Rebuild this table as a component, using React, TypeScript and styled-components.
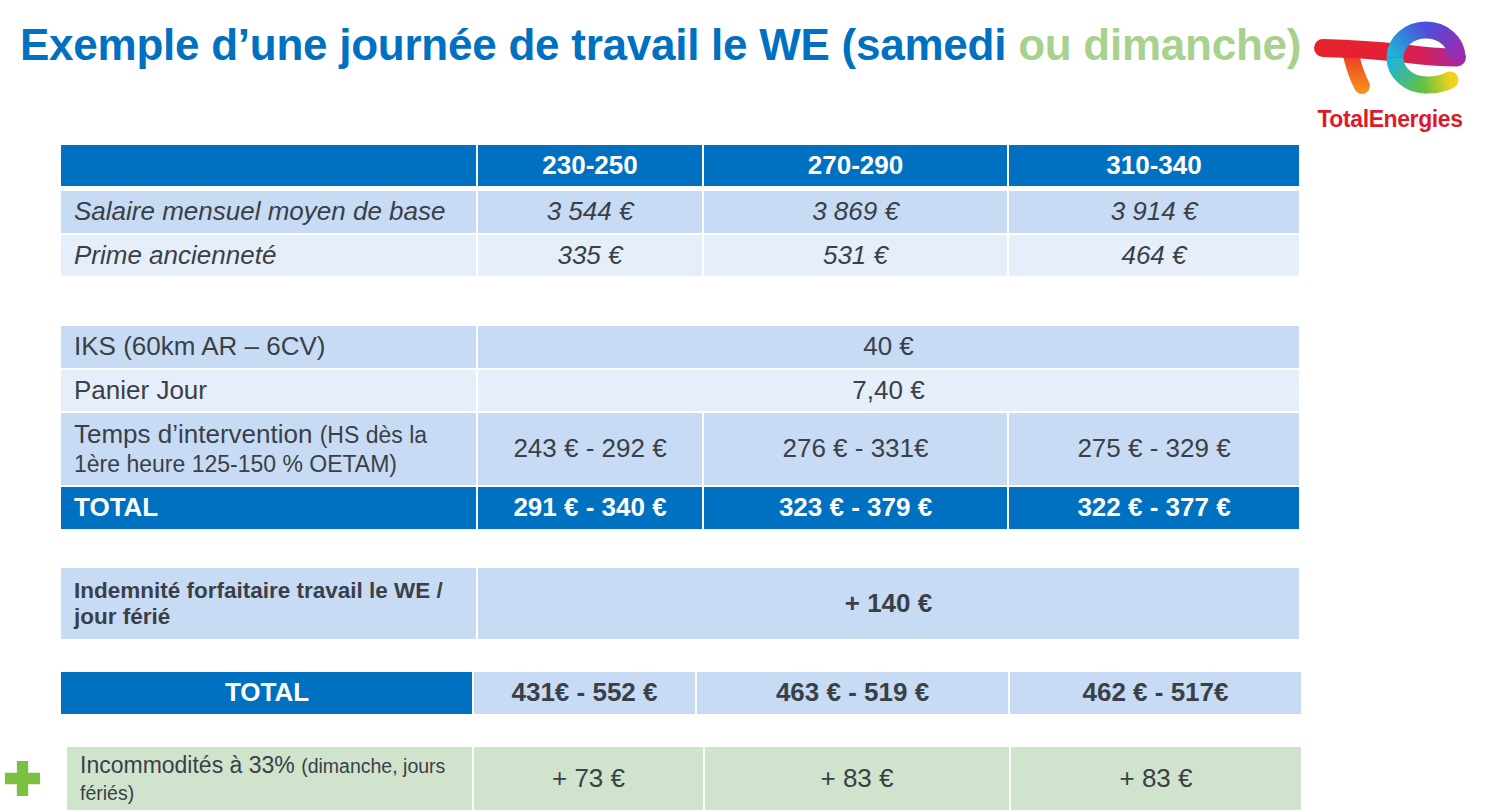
import React from "react";
import styled, { createGlobalStyle } from "styled-components";

const GlobalStyle = createGlobalStyle`
  html, body {
    margin: 0;
    padding: 0;
    background: #ffffff;
  }
  body {
    font-family: "Liberation Sans", Arial, sans-serif;
    color: #3a3f48;
  }
`;

const BLUE = "#0070c0";
const LIGHT = "#c8dbf4";
const PALE = "#e6eef9";
const GREEN = "#d0e3cc";

const Slide = styled.div`
  width: 1490px;
  height: 812px;
  overflow: hidden;
  background: #fff;
  display: flex;
  flex-direction: column;
`;

const Header = styled.header`
  height: 145px;
  display: flex;
  justify-content: space-between;
  align-items: flex-start;
`;

const Title = styled.h1`
  margin: 20px 0 0 20px;
  font-size: 44px;
  line-height: 50px;
  font-weight: 700;
  color: ${BLUE};
  letter-spacing: -0.25px;
  white-space: nowrap;

  & span {
    color: #a9d18e;
  }
`;

const Logo = styled.div`
  width: 170px;
  margin: 15px 15px 0 0;
  display: flex;
  flex-direction: column;
  align-items: center;
`;

const LogoText = styled.div`
  margin-top: 7px;
  font-size: 23px;
  font-weight: 700;
  letter-spacing: -0.4px;
  color: #dd1a2a;
`;

const Table = styled.div<{ $cols: string; $left?: number; $mt: number }>`
  display: grid;
  grid-template-columns: ${(p) => p.$cols};
  column-gap: 2px;
  row-gap: 2px;
  margin-top: ${(p) => p.$mt}px;
  margin-left: ${(p) => p.$left ?? 61}px;
  width: max-content;
`;

type Tone = "blue" | "light" | "pale" | "green";

const toneBg: Record<Tone, string> = {
  blue: BLUE,
  light: LIGHT,
  pale: PALE,
  green: GREEN,
};

const Cell = styled.div<{
  $tone: Tone;
  $h: number;
  $span?: number;
  $label?: boolean;
  $bold?: boolean;
  $italic?: boolean;
  $size?: number;
  $center?: boolean;
  $padR?: number;
}>`
  background: ${(p) => toneBg[p.$tone]};
  height: ${(p) => p.$h}px;
  grid-column: ${(p) => (p.$span ? `span ${p.$span}` : "auto")};
  display: flex;
  align-items: center;
  justify-content: ${(p) => (p.$label && !p.$center ? "flex-start" : "center")};
  padding: ${(p) => (p.$label ? `0 ${p.$padR ?? 12}px 0 13px` : "0")};
  box-sizing: border-box;
  font-size: ${(p) => p.$size ?? 26}px;
  line-height: 1.15;
  font-weight: ${(p) => (p.$bold ? 700 : 400)};
  font-style: ${(p) => (p.$italic ? "italic" : "normal")};
  color: ${(p) => (p.$tone === "blue" ? "#ffffff" : "#3a3f48")};
  white-space: ${(p) => (p.$label ? "normal" : "nowrap")};
`;

const Mixed = styled.div<{ $lh: number }>`
  line-height: ${(p) => p.$lh}px;
`;

const Small = styled.span<{ $size: number }>`
  font-size: ${(p) => p.$size}px;
`;

const Gap = styled.div<{ $h: number }>`
  height: ${(p) => p.$h}px;
  grid-column: 1 / -1;
`;

const PlusRow = styled.div`
  display: flex;
  align-items: center;
  margin-top: 33px;
`;

const PlusIcon = styled.div`
  width: 62px;
  display: flex;
  justify-content: flex-start;
  padding-left: 5px;
  box-sizing: border-box;
`;

const MAIN_COLS = "415px 224px 303px 290px";

function TotalLogo() {
  return (
    <svg width="170" height="84" viewBox="0 0 170 84">
      <defs>
        <linearGradient id="bar" x1="10" y1="0" x2="160" y2="0" gradientUnits="userSpaceOnUse">
          <stop offset="0" stopColor="#e8222c" />
          <stop offset="0.5" stopColor="#e21f36" />
          <stop offset="0.75" stopColor="#cf2160" />
          <stop offset="1" stopColor="#9a2cae" />
        </linearGradient>
        <linearGradient id="stem" x1="0" y1="36" x2="0" y2="78" gradientUnits="userSpaceOnUse">
          <stop offset="0" stopColor="#ec3424" />
          <stop offset="1" stopColor="#f7941d" />
        </linearGradient>
        <linearGradient id="q1" x1="152" y1="42" x2="121" y2="15" gradientUnits="userSpaceOnUse">
          <stop offset="0" stopColor="#9a2cae" />
          <stop offset="1" stopColor="#4d4fdc" />
        </linearGradient>
        <linearGradient id="q2" x1="121" y1="15" x2="90" y2="42" gradientUnits="userSpaceOnUse">
          <stop offset="0" stopColor="#4d4fdc" />
          <stop offset="1" stopColor="#1fb3d7" />
        </linearGradient>
        <linearGradient id="q3" x1="90" y1="42" x2="121" y2="70" gradientUnits="userSpaceOnUse">
          <stop offset="0" stopColor="#1fb3d7" />
          <stop offset="1" stopColor="#63c146" />
        </linearGradient>
        <linearGradient id="q4" x1="118" y1="70" x2="146" y2="64" gradientUnits="userSpaceOnUse">
          <stop offset="0" stopColor="#63c146" />
          <stop offset="1" stopColor="#f4d21a" />
        </linearGradient>
      </defs>
      <path d="M45 36 Q50 58 57 71" stroke="url(#stem)" strokeWidth="16" strokeLinecap="round" fill="none" />
      <path d="M18 33 Q60 34 100 38.5 Q128 42.5 152 42.5" stroke="url(#bar)" strokeWidth="18" strokeLinecap="round" fill="none" />
      <path d="M152 42.5 A31 27.5 0 0 0 121 15" stroke="url(#q1)" strokeWidth="17" fill="none" />
      <path d="M121 15 A31 27.5 0 0 0 90 42.5" stroke="url(#q2)" strokeWidth="17" fill="none" />
      <path d="M90 42.5 A31 27.5 0 0 0 121 70" stroke="url(#q3)" strokeWidth="17" fill="none" />
      <path d="M120.5 70 Q135 70.5 145 65" stroke="url(#q4)" strokeWidth="17" strokeLinecap="round" fill="none" />
    </svg>
  );
}

function Plus() {
  return (
    <svg width="35" height="35" viewBox="0 0 34 34">
      <path d="M11.5 0h11v11.5H34v11H22.5V34h-11V22.5H0v-11h11.5z" fill="#7bc043" />
    </svg>
  );
}

const base = [
  { label: "Salaire mensuel moyen de base", values: ["3 544 €", "3 869 €", "3 914 €"], tone: "light" as Tone, h: 42 },
  { label: "Prime ancienneté", values: ["335 €", "531 €", "464 €"], tone: "pale" as Tone, h: 41 },
];

export default function App() {
  return (
    <>
      <GlobalStyle />
      <Slide>
        <Header>
          <Title>
            Exemple d’une journée de travail le WE (samedi <span>ou dimanche)</span>
          </Title>
          <Logo>
            <TotalLogo />
            <LogoText>TotalEnergies</LogoText>
          </Logo>
        </Header>

        <Table $cols={MAIN_COLS} $mt={0}>
          <Cell $tone="blue" $h={41} />
          {["230-250", "270-290", "310-340"].map((v) => (
            <Cell key={v} $tone="blue" $h={41} $bold>
              {v}
            </Cell>
          ))}
          <Gap $h={1} />
          {base.map((row) => (
            <React.Fragment key={row.label}>
              <Cell $tone={row.tone} $h={row.h} $label $italic>
                {row.label}
              </Cell>
              {row.values.map((v) => (
                <Cell key={v} $tone={row.tone} $h={row.h} $italic>
                  {v}
                </Cell>
              ))}
            </React.Fragment>
          ))}
        </Table>

        <Table $cols={MAIN_COLS} $mt={50}>
          <Cell $tone="light" $h={42} $label>
            IKS (60km AR – 6CV)
          </Cell>
          <Cell $tone="light" $h={42} $span={3}>
            40 €
          </Cell>
          <Cell $tone="pale" $h={41} $label>
            Panier Jour
          </Cell>
          <Cell $tone="pale" $h={41} $span={3}>
            7,40 €
          </Cell>
          <Cell $tone="light" $h={72} $label>
            <Mixed $lh={28}>
              Temps d’intervention <Small $size={23}>(HS dès la 1ère heure 125-150 % OETAM)</Small>
            </Mixed>
          </Cell>
          {["243 € - 292 €", "276 € - 331€", "275 € - 329 €"].map((v) => (
            <Cell key={v} $tone="light" $h={72}>
              {v}
            </Cell>
          ))}
          <Cell $tone="blue" $h={42} $label $bold>
            TOTAL
          </Cell>
          {["291 € - 340 €", "323 € - 379 €", "322 € - 377 €"].map((v) => (
            <Cell key={v} $tone="blue" $h={42} $bold>
              {v}
            </Cell>
          ))}
        </Table>

        <Table $cols={MAIN_COLS} $mt={39}>
          <Cell $tone="light" $h={71} $label $bold $size={22.5} $padR={20}>
            Indemnité forfaitaire travail le WE / jour férié
          </Cell>
          <Cell $tone="light" $h={71} $span={3} $bold>
            + 140 €
          </Cell>
        </Table>

        <Table $cols="411px 221px 311px 291px" $mt={33}>
          <Cell $tone="blue" $h={42} $label $center $bold>
            TOTAL
          </Cell>
          {["431€ - 552 €", "463 € - 519 €", "462 € - 517€"].map((v) => (
            <Cell key={v} $tone="light" $h={42} $bold>
              {v}
            </Cell>
          ))}
        </Table>

        <PlusRow>
          <PlusIcon>
            <Plus />
          </PlusIcon>
          <Table $cols="405px 229px 304px 290px" $mt={0} $left={5}>
            <Cell $tone="green" $h={63} $label $size={23} $padR={16}>
              <Mixed $lh={26}>
                Incommodités à 33% <Small $size={19.5}>(dimanche, jours fériés)</Small>
              </Mixed>
            </Cell>
            {["+ 73 €", "+ 83 €", "+ 83 €"].map((v, i) => (
              <Cell key={i} $tone="green" $h={63}>
                {v}
              </Cell>
            ))}
          </Table>
        </PlusRow>
      </Slide>
    </>
  );
}
